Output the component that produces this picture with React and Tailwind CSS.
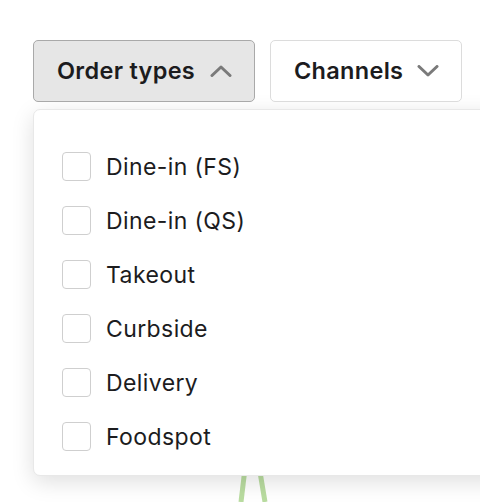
const ORDER_TYPES = ['Dine-in (FS)', 'Dine-in (QS)', 'Takeout', 'Curbside', 'Delivery', 'Foodspot'];

function Chevron({ up }) {
  return (
    <svg width="22" height="12" viewBox="0 0 22 12" fill="none" className="shrink-0">
      <path
        d={up ? 'M2 10.5 L11 2 L20 10.5' : 'M2 1.5 L11 10 L20 1.5'}
        stroke="#7a7a7a"
        strokeWidth="3"
        strokeLinecap="round"
        strokeLinejoin="round"
      />
    </svg>
  );
}

export default function App() {
  return (
    <div
      className="relative w-[480px] h-[502px] overflow-hidden bg-white text-[#1c1c1e]"
      style={{ fontFamily: 'Inter, "Noto Sans", sans-serif' }}
    >
      {/* chart lines peeking out below the menu */}
      <svg className="absolute left-0 top-0 z-0" width="480" height="502">
        <path d="M246 460 L241 502" stroke="#b9dca0" strokeWidth="5" />
        <path d="M258 460 L265 502" stroke="#b9dca0" strokeWidth="5" />
      </svg>

      <div className="relative z-10 pt-[40px] pl-[33px]">
        <div className="flex gap-[15px]">
          <button className="flex items-center h-[62px] w-[222px] pl-[23px] gap-[15px] rounded-[5px] border border-[#a9a9a9] bg-[#e6e6e6] text-[23.5px] font-semibold tracking-[0.3px]">
            Order types
            <Chevron up />
          </button>
          <button className="flex items-center h-[62px] w-[192px] pl-[23px] gap-[14px] rounded-[5px] border border-[#dcdcdc] bg-white text-[23.5px] font-semibold tracking-[0.3px]">
            Channels
            <Chevron />
          </button>
        </div>

        <div className="mt-[7px] w-[470px] h-[367px] rounded-[7px] border border-[#e8e8e8] bg-white shadow-[0_6px_22px_rgba(0,0,0,0.13)] pt-[42px] pl-[28px]">
          <ul className="flex flex-col gap-[25px]">
            {ORDER_TYPES.map(t => (
              <li key={t} className="flex items-center gap-[15px]">
                <span className="w-[29px] h-[29px] rounded-[4px] border border-[#cfcfcf] bg-white shrink-0" />
                <span className="text-[23px] leading-none tracking-[0.4px] pt-[2px]">{t}</span>
              </li>
            ))}
          </ul>
        </div>
      </div>
    </div>
  );
}
